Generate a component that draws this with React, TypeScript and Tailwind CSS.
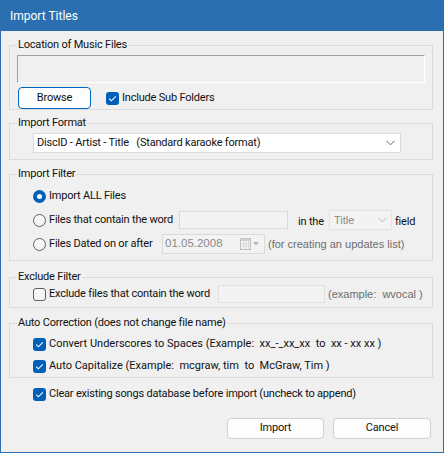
import React from "react"

function Check({ checked }: { checked?: boolean }) {
  if (!checked)
    return <span className="w-[13px] h-[13px] rounded-[3px] border border-[#5f5f5f] bg-[#f6f6f6] shrink-0" />
  return (
    <span className="w-[13px] h-[13px] rounded-[3px] bg-[#005fb8] flex items-center justify-center shrink-0">
      <svg width="13" height="13" viewBox="0 0 13 13">
        <polyline points="3.2,6.6 5.4,8.8 9.8,4.4" fill="none" stroke="white" strokeWidth="1.1" />
      </svg>
    </span>
  )
}

function Radio({ checked }: { checked?: boolean }) {
  if (!checked)
    return <span className="w-[13px] h-[13px] rounded-full border border-[#5f5f5f] bg-[#f6f6f6] shrink-0" />
  return (
    <span className="w-[13px] h-[13px] rounded-full bg-[#005fb8] flex items-center justify-center shrink-0">
      <span className="w-[5px] h-[5px] rounded-full bg-white" />
    </span>
  )
}

function Group({ title, className, children }: { title: string; className?: string; children: React.ReactNode }) {
  return (
    <fieldset className={`w-[424px] border border-[#dcdcdc] px-[7px] min-w-0 ${className ?? ""}`}>
      <legend className="px-[1px] leading-[14px]">{title}</legend>
      {children}
    </fieldset>
  )
}

export default function App() {
  return (
    <div className="w-[444px] h-[453px] bg-[#f0f0f0] flex flex-col font-['Roboto',sans-serif] text-[11px] tracking-[-0.2px] text-[#111] whitespace-nowrap">
      {/* Title bar */}
      <div className="h-[31px] shrink-0 bg-[#2b6fb0] flex items-center pl-[10px] text-white text-[12px] tracking-normal">Import Titles</div>

      <div className="flex-1 flex flex-col border-x border-b border-[#2b6fb0] pl-[8px] pr-[10px] pt-[7px]">
        {/* Location */}
        <Group title="Location of Music Files">
          <div className="mt-[3px] h-[28px] border-t border-l border-[#a0a0a0] border-r border-b border-r-white border-b-white" />
          <div className="mt-[4px] h-[22px] flex items-center">
            <button className="ml-[1px] w-[73px] h-[22px] bg-[#fdfdfd] border border-[#0067c0] rounded-[4px] flex items-center justify-center">
              Browse
            </button>
            <span className="ml-[15px] flex items-center gap-[3px]">
              <Check checked />
              Include Sub Folders
            </span>
          </div>
        </Group>

        {/* Format */}
        <Group title="Import Format" className="mt-[6px] pb-[6px]">
          <div className="mt-[3px] ml-[16px] w-[368px] h-[20px] bg-white border border-[#d9d9d9] flex items-center pl-[3px] pr-[5px]">
            <span className="flex-1 whitespace-pre">DiscID - Artist - Title   (Standard karaoke format)</span>
            <svg width="9" height="6" viewBox="0 0 9 6">
              <polyline points="0.5,0.8 4.5,4.8 8.5,0.8" fill="none" stroke="#606060" strokeWidth="1" />
            </svg>
          </div>
        </Group>

        {/* Filter */}
        <Group title="Import Filter" className="mt-[7px] pb-[4px]">
          <div className="mt-[3px] ml-[16px] flex flex-col">
            <div className="h-[24px] flex items-center">
              <Radio checked />
              <span className="ml-[3px]">Import ALL Files</span>
            </div>
            <div className="h-[24px] flex items-center">
              <Radio />
              <span className="ml-[3px] w-[130px]">Files that contain the word</span>
              <span className="w-[109px] h-[18px] bg-[#f3f3f3] border border-[#dadada]" />
              <span className="ml-[10px] w-[31px] mt-[4px]">in the</span>
              <span className="w-[63px] h-[20px] bg-[#f3f3f3] border border-[#e2e2e2] flex items-center pl-[4px] pr-[4px] text-[#8a8a8a] font-['Liberation_Sans',sans-serif] tracking-normal">
                <span className="flex-1">Title</span>
                <svg width="9" height="6" viewBox="0 0 9 6">
                  <polyline points="0.5,0.8 4.5,4.8 8.5,0.8" fill="none" stroke="#b5b5b5" strokeWidth="1" />
                </svg>
              </span>
              <span className="ml-[3px] mt-[4px]">field</span>
            </div>
            <div className="h-[24px] flex items-center">
              <Radio />
              <span className="ml-[3px] w-[113px]">Files Dated on or after</span>
              <span className="w-[103px] h-[20px] bg-[#f3f3f3] border border-[#dadada] flex items-center pl-[2px] pr-[4px] text-[#8a8a8a] font-['Liberation_Sans',sans-serif] text-[11.5px] tracking-normal">
                <span className="flex-1">01.05.2008</span>
                <svg width="20" height="12" viewBox="0 0 20 12">
                  <rect x="0.5" y="0.5" width="10" height="11" fill="#f7f7f7" stroke="#bcbcbc" />
                  <rect x="0.5" y="0.5" width="10" height="2.5" fill="#cfcfcf" />
                  <path d="M3.5 3v8.5M6 3v8.5M8.5 3v8.5M0.5 5.5h10M0.5 8h10" stroke="#d4d4d4" strokeWidth="0.8" />
                  <polygon points="13,4 19,4 16,7.5" fill="#b5b5b5" />
                </svg>
              </span>
              <span className="ml-[3px] text-[#6d6d6d] font-['Liberation_Sans',sans-serif] tracking-normal">(for creating an updates list)</span>
            </div>
          </div>
        </Group>

        {/* Exclude */}
        <Group title="Exclude Filter" className="mt-[9px] pb-[3px]">
          <div className="ml-[16px] h-[20px] flex items-center">
            <Check />
            <span className="ml-[3px] w-[169px]">Exclude files that contain the word</span>
            <span className="w-[107px] h-[18px] bg-[#f3f3f3] border border-[#e0e0e0]" />
            <span className="ml-[3px] whitespace-pre text-[#6d6d6d] font-['Liberation_Sans',sans-serif] tracking-normal">(example:  wvocal )</span>
          </div>
        </Group>

        {/* Auto correction */}
        <Group title="Auto Correction (does not change file name)" className="mt-[8px]">
          <div className="mt-[3px] ml-[16px] flex flex-col tracking-normal">
            <div className="h-[22px] flex items-center gap-[3px] whitespace-pre">
              <Check checked />
              Convert Underscores to Spaces (Example:  xx_-_xx_xx  to  xx - xx xx )
            </div>
            <div className="h-[22px] flex items-center gap-[3px] whitespace-pre">
              <Check checked />
              Auto Capitalize (Example:  mcgraw, tim  to  McGraw, Tim )
            </div>
          </div>
        </Group>

        <div className="mt-[5px] ml-[24px] h-[22px] flex items-center gap-[3px]">
          <Check checked />
          Clear existing songs database before import (uncheck to append)
        </div>

        <div className="mt-[13px] mr-[2px] flex justify-end gap-[9px]">
          <button className="w-[97px] h-[21px] bg-[#fdfdfd] border border-[#d0d0d0] rounded-[4px] flex items-center justify-center">
            Import
          </button>
          <button className="w-[98px] h-[21px] bg-[#fdfdfd] border border-[#d0d0d0] rounded-[4px] flex items-center justify-center">
            Cancel
          </button>
        </div>
      </div>
    </div>
  )
}
